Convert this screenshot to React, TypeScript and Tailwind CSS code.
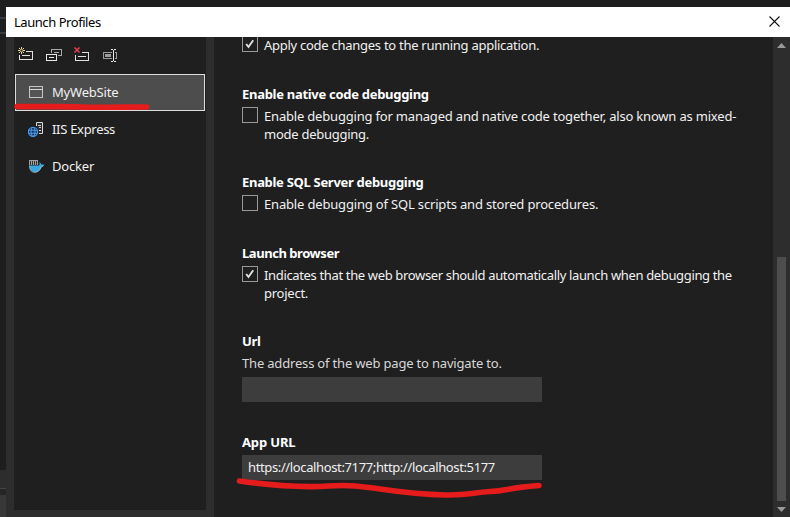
import type { ReactNode } from "react";

function NewIcon() {
  return (
    <svg width="16" height="16" viewBox="0 0 16 16" fill="none" shapeRendering="crispEdges">
      <path d="M8 4.5H14.5V12.5H1.5V8" stroke="#e0e0e0" />
      <path d="M4 8.5H12" stroke="#e0e0e0" />
      <g stroke="#ecd796" shapeRendering="auto">
        <path d="M3.5 0V2M3.5 5V7M0 3.5H2M5 3.5H7M1 1L2.5 2.5M4.5 4.5L6 6M6 1L4.5 2.5M2.5 4.5L1 6" />
        <path d="M2.5 2.5H4.5V4.5H2.5Z" strokeOpacity="0.5" />
      </g>
    </svg>
  );
}

function CopyIcon() {
  return (
    <svg width="16" height="14" viewBox="0 0 16 14" fill="none" shapeRendering="crispEdges">
      <path d="M5.5 5V1.5H15.5V7.5H12" stroke="#a8a8a8" />
      <path d="M8 4.5H13" stroke="#a8a8a8" />
      <path d="M0.5 6.5H10.5V12.5H0.5Z" stroke="#e8e8e8" />
      <path d="M3 9.5H8" stroke="#e8e8e8" />
    </svg>
  );
}

function DeleteIcon() {
  return (
    <svg width="16" height="16" viewBox="0 0 16 16" fill="none" shapeRendering="crispEdges">
      <path d="M8 5.5H14.5V13.5H1.5V8" stroke="#e0e0e0" />
      <path d="M4 9.5H12" stroke="#e0e0e0" />
      <path d="M0.5 0.5L5.5 5.5M5.5 0.5L0.5 5.5" stroke="#e0404c" strokeWidth="1.5" shapeRendering="auto" />
    </svg>
  );
}

function RenameIcon() {
  return (
    <svg width="15" height="14" viewBox="0 0 15 14" fill="none" shapeRendering="crispEdges">
      <path d="M9 3.5H0.5V9.5H9M12 3.5H13.5V9.5H12" stroke="#9c9c9c" />
      <path d="M2 6.5H8" stroke="#9c9c9c" strokeWidth="3" />
      <path d="M8 0.5H10M11 0.5H13M10.5 1V12M8 12.5H10M11 12.5H13" stroke="#e8e8e8" />
    </svg>
  );
}

function WindowIcon() {
  return (
    <svg width="14" height="12" viewBox="0 0 14 12" fill="none" shapeRendering="crispEdges">
      <path d="M0.5 0.5H13.5V11.5H0.5Z" fill="#555" stroke="#c4c4c4" />
      <path d="M0 3.5H14" stroke="#d6d6d6" />
    </svg>
  );
}

function IisIcon() {
  return (
    <svg width="16" height="15" viewBox="0 0 16 15" fill="none">
      <path d="M8.5 4V0.5H14.5V11.5H11" fill="#303030" stroke="#d8d8d8" />
      <path d="M10 3.5H13M11 5.5H13M11 8.5H13" stroke="#cfcfcf" />
      <circle cx="5" cy="9.8" r="4.6" fill="#1d3553" stroke="#4b9cf5" strokeWidth="1.1" />
      <ellipse cx="5" cy="9.8" rx="2" ry="4.6" stroke="#4b9cf5" />
      <path d="M0.8 8.3H9.2M0.8 11.3H9.2" stroke="#4b9cf5" strokeWidth="1.1" />
    </svg>
  );
}

function DockerIcon() {
  return (
    <svg width="15" height="13" viewBox="0 0 15 13" fill="none">
      <path d="M0 0H9V5H0Z" fill="#333" />
      <path d="M0 0.5H9M0.5 0V5M2.5 0V5M4.5 0V5M6.5 0V5M8.5 0V5" stroke="#a0a0a0" shapeRendering="crispEdges" />
      <path d="M0.5 5.5H10Q11.2 4.5 10.2 2.2Q12 2.8 12.3 4.5H14.8Q14.5 6.5 12.2 6.8Q11 11.8 6 12.3Q0.5 11.5 0.5 5.5Z" fill="#35a9e0" />
      <path d="M0.5 5.5Q0.5 12.3 6 12.3Q10.5 12 12 7Q14 6.8 14.5 5" stroke="#b9cfd8" strokeWidth="0.8" />
    </svg>
  );
}

function Checkbox({ checked = false }: { checked?: boolean }) {
  return (
    <span className="flex size-4 shrink-0 items-center justify-center border border-[#999999]">
      {checked && (
        <svg width="10" height="10" viewBox="0 0 10 10" fill="none">
          <path d="M1.2 5L3.5 8L8.2 1.2" stroke="#e2e2e2" strokeWidth="1.9" />
        </svg>
      )}
    </span>
  );
}

function Heading({ children, className }: { children: ReactNode; className: string }) {
  return (
    <h2 className={`h-[18px] whitespace-nowrap font-bold text-white ${className}`}>{children}</h2>
  );
}

function Line({ children, className = "" }: { children: ReactNode; className?: string }) {
  return <span className={`block whitespace-nowrap ${className}`}>{children}</span>;
}

function Option({ checked, children }: { checked?: boolean; children: ReactNode }) {
  return (
    <label className="mt-[3px] flex items-start gap-1.5">
      <Checkbox checked={checked} />
      <span className="leading-[18px] text-[#f1f1f1]">{children}</span>
    </label>
  );
}

export default function App() {
  return (
    <div className="relative flex h-[517px] w-[790px] overflow-hidden bg-[#1e1e1e] font-['Noto_Sans','Open_Sans',sans-serif] text-[13px]">
      <div className="flex w-1.5 shrink-0 flex-col">
        <div className="mt-[17px] h-[17px] border-y-2 border-[#3a3a3a]" />
        <div className="mt-auto h-[18px] bg-[#2d2d2d]" />
        <div className="h-[7px] border-t border-[#444] bg-[#252525]" />
        <div className="h-[22px] bg-[#383838]" />
      </div>

      <div className="mt-[7px] flex min-w-0 flex-1 flex-col bg-[#2d2d2d]">
        <header className="flex h-[30px] shrink-0 items-center justify-between bg-white pl-2 pr-2.5 text-black">
          <h1 className="text-[13px] leading-[18px] tracking-[-0.45px]">Launch Profiles</h1>
          <svg width="11" height="11" viewBox="0 0 11 11" className="-mt-0.5">
            <path d="M0.5 0.5L10.5 10.5M10.5 0.5L0.5 10.5" stroke="#111" strokeWidth="1.1" />
          </svg>
        </header>

        <div className="flex min-h-0 flex-1">
          <aside className="ml-2 mr-2 mb-[7px] flex w-48 shrink-0 flex-col bg-[#1f1f1f] px-px">
            <div className="flex h-[37px] items-start pl-[3px] pt-[10px]">
              <div className="w-7"><NewIcon /></div>
              <div className="w-7 pt-px"><CopyIcon /></div>
              <div className="w-7"><DeleteIcon /></div>
              <div className="pl-px pt-0.5"><RenameIcon /></div>
            </div>
            <div className="flex h-[37px] items-center border border-[#dedede] bg-[#4d4d4d] pl-[13px] text-[#f1f1f1]">
              <span className="w-[23px] pb-px"><WindowIcon /></span>
              <span className="tracking-[-0.2px]">MyWebSite</span>
            </div>
            <div className="flex h-[37px] items-center pl-[13px] text-[#f1f1f1]">
              <span className="w-6"><IisIcon /></span>
              <span className="tracking-[-0.3px]">IIS Express</span>
            </div>
            <div className="flex h-[37px] items-center pl-3.5 text-[#f1f1f1]">
              <span className="w-[23px]"><DockerIcon /></span>
              <span className="tracking-[-0.17px]">Docker</span>
            </div>
          </aside>

          <main className="flex min-w-0 flex-1 flex-col overflow-hidden bg-[#1f1f1f] pl-7">
            <div className="-mt-1 h-[53px] shrink-0">
              <Option checked>
                <Line className="tracking-[-0.27px]">Apply code changes to the running application.</Line>
              </Option>
            </div>
            <section className="h-[88px] shrink-0">
              <Heading className="leading-4 tracking-[-0.29px]">Enable native code debugging</Heading>
              <Option>
                <Line className="tracking-[-0.19px]">Enable debugging for managed and native code together, also known as mixed-</Line>
                <Line className="tracking-[-0.26px]">mode debugging.</Line>
              </Option>
            </section>
            <section className="h-[71px] shrink-0">
              <Heading className="leading-4 tracking-[-0.3px]">Enable SQL Server debugging</Heading>
              <Option>
                <Line className="tracking-[-0.17px]">Enable debugging of SQL scripts and stored procedures.</Line>
              </Option>
            </section>
            <section className="h-[88px] shrink-0">
              <Heading className="leading-4 tracking-[-0.45px]">Launch browser</Heading>
              <Option checked>
                <Line className="tracking-[-0.35px]">Indicates that the web browser should automatically launch when debugging the</Line>
                <Line className="tracking-[-0.25px]">project.</Line>
              </Option>
            </section>
            <section className="h-[100px] shrink-0">
              <Heading className="leading-4 tracking-[-0.3px]">Url</Heading>
              <p className="mt-[3px] leading-[18px] text-[#d8d8d8]">
                <Line className="tracking-[-0.18px]">The address of the web page to navigate to.</Line>
              </p>
              <div className="mt-[5px] h-[25px] w-[300px] bg-[#3d3d3d]" />
            </section>
            <section className="shrink-0">
              <Heading className="leading-[18px] tracking-[-0.15px]">App URL</Heading>
              <div className="mt-1 flex h-[25px] w-[300px] items-center bg-[#3d3d3d] pl-1.5 text-[#f1f1f1]">
                <Line className="tracking-[-0.37px]">https://localhost:7177;http://localhost:5177</Line>
              </div>
            </section>
          </main>

          <div className="flex w-[17px] shrink-0 flex-col items-center bg-[#2d2d2d] pb-[5px] pt-1.5">
            <svg width="9" height="5" viewBox="0 0 9 5"><path d="M4.5 0L9 5H0Z" fill="#999" /></svg>
            <div className="mt-auto h-[244px] w-[9px] bg-[#4d4d4d]" />
            <svg width="9" height="5" viewBox="0 0 9 5" className="mt-1.5"><path d="M0 0H9L4.5 5Z" fill="#999" /></svg>
          </div>
        </div>
      </div>

      <svg className="pointer-events-none absolute inset-0" width="790" height="517" viewBox="0 0 790 517" fill="none" stroke="#e61c1c" strokeWidth="5.6" strokeLinecap="round" strokeLinejoin="round">
        <path d="M17 106.5C45 107 65 106 90 107.2C110 107.5 130 107 146.5 107" />
        <path d="M239.5 481C260 484 285 486.5 310 486.6C328 486.8 336 484.5 355 486C380 488 402 494 445 495C470 495.5 472 492.5 490 491.5C508 491 505 488 539 485.5" />
      </svg>
    </div>
  );
}
